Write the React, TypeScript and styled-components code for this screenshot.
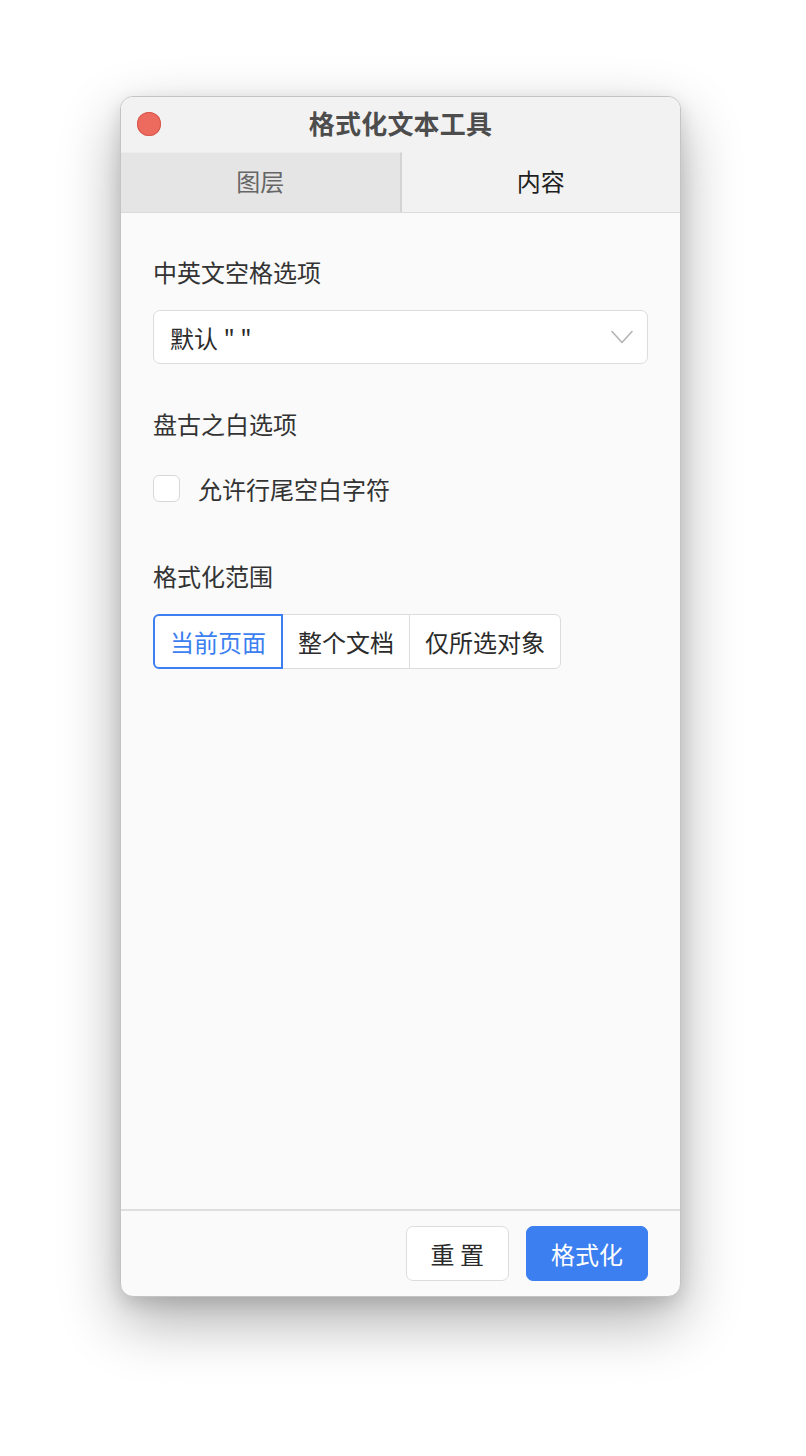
import React, { useState } from 'react';
import styled, { createGlobalStyle } from 'styled-components';

const GlobalStyle = createGlobalStyle`
  html, body {
    margin: 0;
    padding: 0;
    background: #ffffff;
  }
  body {
    font-family: "Noto Sans CJK SC", "Noto Sans", sans-serif;
  }
`;

const Page = styled.div`
  display: flex;
  justify-content: flex-start;
  padding: 96px 0 0 120px;
  height: 1456px;
  box-sizing: border-box;
`;

const Window = styled.div`
  width: 561px;
  height: 1201px;
  box-sizing: border-box;
  display: flex;
  flex-direction: column;
  border: 1px solid #c4c4c4;
  border-radius: 13px;
  overflow: hidden;
  background: #fafafa;
  box-shadow: 0 24px 60px rgba(0, 0, 0, 0.32), 0 6px 18px rgba(0, 0, 0, 0.12);
`;

const TitleBar = styled.div`
  position: relative;
  height: 55px;
  box-sizing: border-box;
  padding-bottom: 5px;
  display: flex;
  align-items: center;
  justify-content: center;
  background: #f2f2f2;
`;

const CloseDot = styled.span`
  position: absolute;
  left: 16px;
  top: 15px;
  width: 24px;
  height: 24px;
  border-radius: 50%;
  background: #ec6a5e;
  box-shadow: inset 0 0 0 1px #d8584d;
`;

const Title = styled.div`
  font-size: 26px;
  font-weight: 700;
  color: #4d4d4d;
  letter-spacing: 0.2px;
`;

const TabRow = styled.div`
  display: flex;
  height: 61px;
  box-sizing: border-box;
  border-bottom: 1px solid #dadada;
  background: #f2f2f2;
`;

const Tab = styled.button<{ $active: boolean }>`
  flex: 1;
  border: none;
  margin: 0;
  padding: 0 0 5px;
  font-family: inherit;
  font-size: 24px;
  cursor: pointer;
  background: ${p => (p.$active ? '#f2f2f2' : '#e5e5e5')};
  color: ${p => (p.$active ? '#1f1f1f' : '#666666')};
  border-top: 1px solid ${p => (p.$active ? '#f2f2f2' : '#ededed')};
  border-right: ${p => (p.$active ? 'none' : '2px solid #d4d4d4')};
`;

const Content = styled.div`
  flex: 1;
  padding: 44px 32px 0;
  display: flex;
  flex-direction: column;
`;

const Field = styled.div<{ $gap: number; $after: number }>`
  display: flex;
  flex-direction: column;
  gap: ${p => p.$gap}px;
  margin-bottom: ${p => p.$after}px;
`;

const Label = styled.div`
  font-size: 24px;
  line-height: 30px;
  color: #333333;
`;

const Select = styled.div`
  height: 54px;
  box-sizing: border-box;
  display: flex;
  align-items: center;
  justify-content: space-between;
  padding: 0 14px 0 16px;
  background: #ffffff;
  border: 1.5px solid #dddddd;
  border-radius: 7px;
  font-size: 24px;
  color: #2b2b2b;
`;

const CheckRow = styled.label`
  display: flex;
  align-items: center;
  gap: 18px;
  height: 30px;
  font-size: 24px;
  color: #333333;
  cursor: pointer;
`;

const Checkbox = styled.span<{ $checked: boolean }>`
  width: 27px;
  height: 27px;
  box-sizing: border-box;
  border: 1.5px solid #d8d8d8;
  border-radius: 6px;
  background: ${p => (p.$checked ? '#3b7ff0' : '#ffffff')};
`;

const Segments = styled.div`
  display: flex;
  align-self: flex-start;
  height: 55px;
`;

const Segment = styled.button<{ $active: boolean; $first: boolean; $last: boolean }>`
  height: 55px;
  box-sizing: border-box;
  padding: 0 15px;
  margin-left: ${p => (p.$first ? 0 : -1)}px;
  font-family: inherit;
  font-size: 24px;
  cursor: pointer;
  background: #ffffff;
  position: relative;
  z-index: ${p => (p.$active ? 1 : 0)};
  color: ${p => (p.$active ? '#3b7ff0' : '#2b2b2b')};
  border: ${p => (p.$active ? '2px solid #3b7ff0' : '1.5px solid #dddddd')};
  border-radius: ${p => (p.$first ? '6px 0 0 6px' : p.$last ? '0 6px 6px 0' : '0')};
`;

const Footer = styled.div`
  height: 87px;
  box-sizing: border-box;
  border-top: 2px solid #dedede;
  display: flex;
  justify-content: flex-end;
  align-items: center;
  gap: 17px;
  padding: 0 32px 0 0;
`;

const Button = styled.button<{ $primary?: boolean }>`
  height: 55px;
  box-sizing: border-box;
  padding: 0 24px;
  font-family: inherit;
  font-size: 24px;
  border-radius: 7px;
  cursor: pointer;
  background: ${p => (p.$primary ? '#3b7ff0' : '#ffffff')};
  color: ${p => (p.$primary ? '#ffffff' : '#2b2b2b')};
  border: 1.5px solid ${p => (p.$primary ? '#3b7ff0' : '#dddddd')};
`;

const Chevron = () => (
  <svg width="22" height="14" viewBox="0 0 22 14" fill="none">
    <path d="M1 1.5 L11 12.5 L21 1.5" stroke="#b4b4b4" strokeWidth="1.6" strokeLinecap="round" strokeLinejoin="round" />
  </svg>
);

const ranges = ['当前页面', '整个文档', '仅所选对象'];

const App: React.FC = () => {
  const [tab, setTab] = useState(1);
  const [range, setRange] = useState(0);
  const [allowTrailing, setAllowTrailing] = useState(false);

  return (
    <>
      <GlobalStyle />
      <Page>
        <Window>
          <TitleBar>
            <CloseDot />
            <Title>格式化文本工具</Title>
          </TitleBar>
          <TabRow>
            <Tab $active={tab === 0} onClick={() => setTab(0)}>图层</Tab>
            <Tab $active={tab === 1} onClick={() => setTab(1)}>内容</Tab>
          </TabRow>
          <Content>
            <Field $gap={23} $after={45}>
              <Label>中英文空格选项</Label>
              <Select>
                <span>默认 " "</span>
                <Chevron />
              </Select>
            </Field>
            <Field $gap={34} $after={58}>
              <Label>盘古之白选项</Label>
              <CheckRow onClick={() => setAllowTrailing(v => !v)}>
                <Checkbox $checked={allowTrailing} />
                允许行尾空白字符
              </CheckRow>
            </Field>
            <Field $gap={23} $after={0}>
              <Label>格式化范围</Label>
              <Segments>
                {ranges.map((r, i) => (
                  <Segment
                    key={r}
                    $active={range === i}
                    $first={i === 0}
                    $last={i === ranges.length - 1}
                    onClick={() => setRange(i)}
                  >
                    {r}
                  </Segment>
                ))}
              </Segments>
            </Field>
          </Content>
          <Footer>
            <Button>重 置</Button>
            <Button $primary>格式化</Button>
          </Footer>
        </Window>
      </Page>
    </>
  );
};

export default App;
